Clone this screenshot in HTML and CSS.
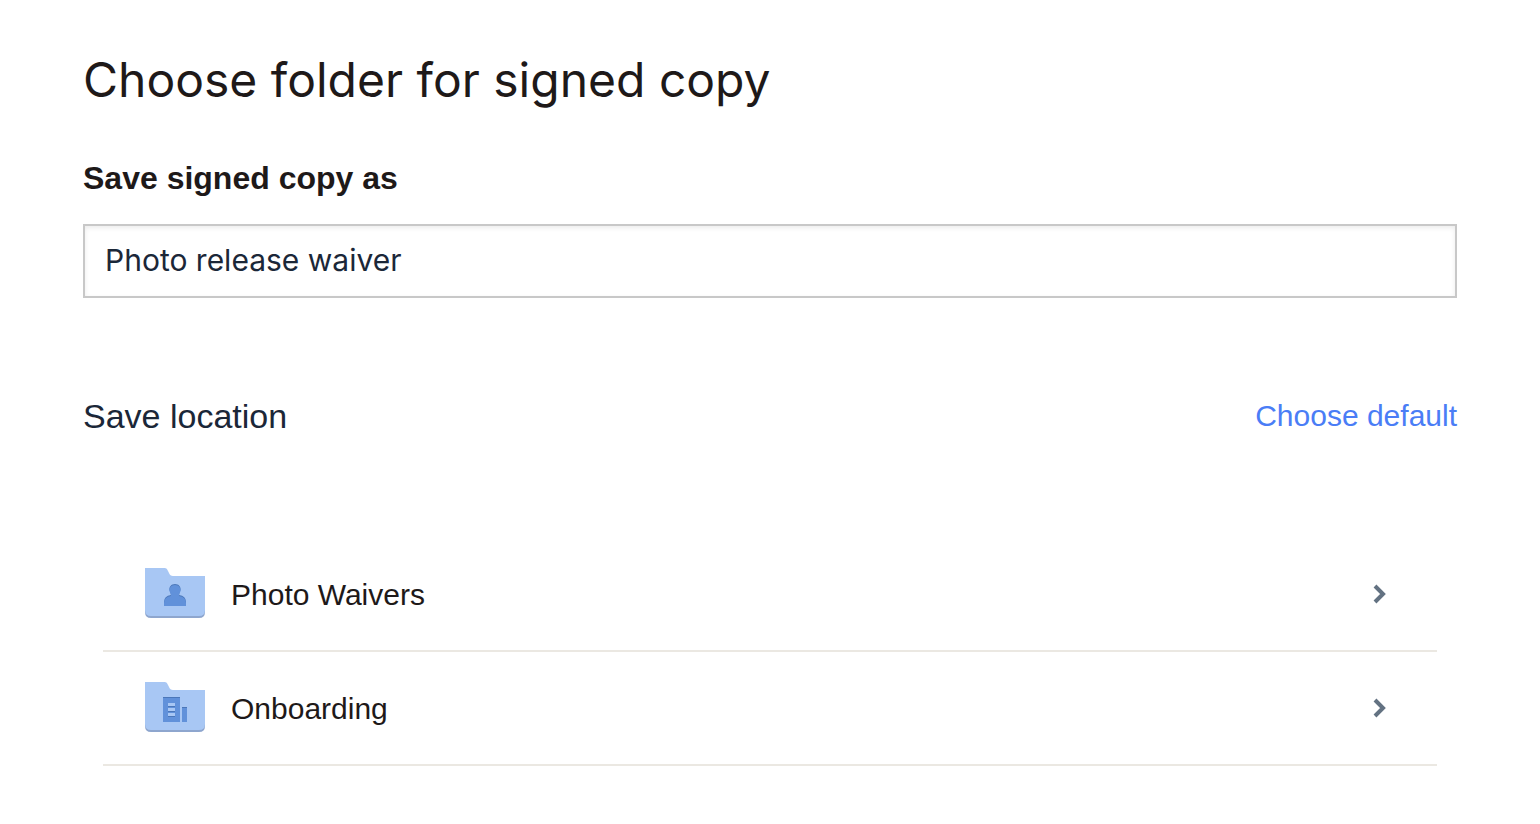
FILE: index.html
```html
<!DOCTYPE html>
<html lang="en">
<head>
<meta charset="utf-8">
<meta name="viewport" content="width=device-width, initial-scale=1">
<title>Choose folder for signed copy</title>
<link rel="stylesheet" href="styles.css">
</head>
<body>
<main class="dialog">
  <h1 class="title">Choose folder for signed copy</h1>
  <label class="field-label" for="copy-name">Save signed copy as</label>
  <input class="field" id="copy-name" type="text" value="Photo release waiver">
  <div class="location">
    <h2 class="location-title">Save location</h2>
    <a class="location-link" href="#">Choose default</a>
  </div>
  <ul class="folders">
    <li class="folder-item">
      <button class="folder" type="button">
        <svg class="folder-icon" viewBox="0 0 60 50" aria-hidden="true">
          <path fill="#8ea6ce" d="M0 10H60V44Q60 50 54 50H6Q0 50 0 44Z"/>
          <path fill="#a8c7f4" d="M0 0H20Q22 0 23 3L24 5Q25 8 28 8H60V42Q60 48 54 48H6Q0 48 0 42Z"/>
          <path fill="#4b77b9" d="M30 16C34 16 36 19 35.500 22C35 24 34 25 34 27Q41 28 41 34V38H19V34Q19 28 26 27C26 25 25 24 24.500 22C24 19 26 16 30 16Z"/>
          <path fill="#6191da" d="M30 17C34 17 36 20 35.500 23C35 25 34 26 34 28Q41 29 41 35V38H19V35Q19 29 26 28C26 26 25 25 24.500 23C24 20 26 17 30 17Z"/>
        </svg>
        <span class="folder-name">Photo Waivers</span>
        <svg class="chevron" viewBox="0 0 14 20" aria-hidden="true"><path d="M2 2L10 10L2 18"/></svg>
      </button>
    </li>
    <li class="folder-item">
      <button class="folder" type="button">
        <svg class="folder-icon" viewBox="0 0 60 50" aria-hidden="true">
          <path fill="#8ea6ce" d="M0 10H60V44Q60 50 54 50H6Q0 50 0 44Z"/>
          <path fill="#a8c7f4" d="M0 0H20Q22 0 23 3L24 5Q25 8 28 8H60V42Q60 48 54 48H6Q0 48 0 42Z"/>
          <path fill="#6191da" d="M18 15H35V40H18ZM37 25H42V40H37Z"/>
          <path fill="#4b77b9" d="M18 15H35V16H18ZM37 25H42V26H37ZM23 24H30V25H23ZM23 29H30V30H23ZM23 34H30V35H23Z"/>
          <path fill="#a8c7f4" d="M23 21H30V24H23ZM23 26H30V29H23ZM23 31H30V34H23Z"/>
        </svg>
        <span class="folder-name">Onboarding</span>
        <svg class="chevron" viewBox="0 0 14 20" aria-hidden="true"><path d="M2 2L10 10L2 18"/></svg>
      </button>
    </li>
  </ul>
</main>
</body>
</html>
```
FILE: styles.css
```css
* {
  box-sizing: border-box;
}

body {
  margin: 0;
  background: #fff;
  color: #1e1919;
  font-family: "Liberation Sans", Arial, sans-serif;
  font-size: 30px;
  line-height: 40px;
}

.dialog {
  display: flex;
  flex-direction: column;
  padding: 48px 83px;
}

.title {
  margin: 0 0 46px;
  font-family: Inter, sans-serif;
  font-size: 48px;
  font-weight: 400;
  line-height: 64px;
}

.field-label {
  margin-bottom: 26px;
  font-size: 32px;
  font-weight: 700;
}

.field {
  width: 100%;
  height: 74px;
  padding: 0 20px 2px;
  border: 2px solid #c8c8c8;
  border-radius: 0;
  outline: 0;
  background: #fff;
  box-shadow: inset 0 2px 5px rgba(0, 0, 0, 0.08);
  color: #1b2738;
  font-family: Inter, sans-serif;
  font-size: 30px;
}

.location {
  display: flex;
  align-items: center;
  justify-content: space-between;
  margin: 98px 0 102px;
}

.location-title {
  margin: 0;
  color: #1b2738;
  font-size: 34px;
  font-weight: 400;
}

.location-link {
  color: #4a7df6;
  text-decoration: none;
}

.folders {
  margin: 0;
  padding: 0 20px;
  list-style: none;
}

.folder-item {
  border-bottom: 2px solid #ebe8e2;
}

.folder {
  display: flex;
  align-items: center;
  width: 100%;
  height: 112px;
  padding: 0 50px 2px 42px;
  border: 0;
  background: none;
  color: inherit;
  font: inherit;
  text-align: left;
  cursor: pointer;
}

.folder-icon {
  width: 60px;
  height: 50px;
  margin-right: 26px;
}

.folder-name {
  flex: 1;
  padding-top: 4px;
}

.chevron {
  width: 14px;
  height: 20px;
  margin-top: 2px;
  fill: none;
  stroke: #637282;
  stroke-width: 4;
}
```
